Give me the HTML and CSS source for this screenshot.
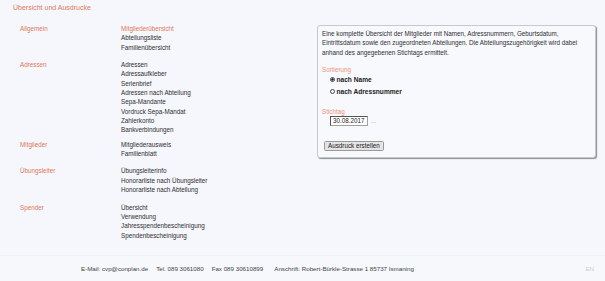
FILE: index.html
```html
<!DOCTYPE html>
<html lang="de">
<head>
    <meta charset="UTF-8">
    <meta name="viewport" content="width=device-width, initial-scale=1.0">
    <title>Übersicht und Ausdrucke</title>
    <link rel="stylesheet" href="styles.css">
</head>
<body>
    <div class="page">
        <h1 class="title">Übersicht und Ausdrucke</h1>

        <div class="main">
            <nav class="menu">
                <div class="group">
                    <div class="group-title">Allgemein</div>
                    <ul class="links">
                        <li class="active">Mitgliederübersicht</li>
                        <li>Abteilungsliste</li>
                        <li>Familienübersicht</li>
                    </ul>
                </div>
                <div class="group compact">
                    <div class="group-title">Adressen</div>
                    <ul class="links">
                        <li>Adressen</li>
                        <li>Adressaufkleber</li>
                        <li>Serienbrief</li>
                        <li>Adressen nach Abteilung</li>
                        <li>Sepa-Mandante</li>
                        <li>Vordruck Sepa-Mandat</li>
                        <li>Zahlerkonto</li>
                        <li>Bankverbindungen</li>
                    </ul>
                </div>
                <div class="group">
                    <div class="group-title">Mitglieder</div>
                    <ul class="links">
                        <li>Mitgliederausweis</li>
                        <li>Familienblatt</li>
                    </ul>
                </div>
                <div class="group">
                    <div class="group-title">Übungsleiter</div>
                    <ul class="links">
                        <li>Übungsleiterinfo</li>
                        <li>Honorarliste nach Übungsleiter</li>
                        <li>Honorarliste nach Abteilung</li>
                    </ul>
                </div>
                <div class="group">
                    <div class="group-title">Spender</div>
                    <ul class="links">
                        <li>Übersicht</li>
                        <li>Verwendung</li>
                        <li>Jahresspendenbescheinigung</li>
                        <li>Spendenbescheinigung</li>
                    </ul>
                </div>
            </nav>

            <div class="panel">
                <p class="desc">Eine komplette Übersicht der Mitglieder mit Namen, Adressnummern, Geburtsdatum, Eintrittsdatum sowie den zugeordneten Abteilungen. Die Abteilungszugehörigkeit wird dabei anhand des angegebenen Stichtags ermittelt.</p>

                <div class="field-label">Sortierung</div>
                <div class="options">
                    <label class="option"><input type="radio" name="sort" checked> nach Name</label>
                    <label class="option"><input type="radio" name="sort"> nach Adressnummer</label>
                </div>

                <div class="field-label stichtag">Stichtag</div>
                <div class="date-row">
                    <input class="date" type="text" value="30.08.2017">
                    <span class="picker">...</span>
                </div>

                <button class="print">Ausdruck erstellen</button>
            </div>
        </div>
    </div>

    <footer class="footer">
        <span>E-Mail: cvp@conplan.de</span>
        <span>Tel. 089 3061080</span>
        <span>Fax 089 30610899</span>
        <span class="address">Anschrift: Robert-Bürkle-Strasse 1 85737 Ismaning</span>
        <span class="lang">EN</span>
    </footer>
</body>
</html>
```

FILE: styles.css
```css
body {
    margin: 0;
    min-height: 100vh;
    display: flex;
    flex-direction: column;
    background-color: #f5f7fc;
    font-family: "Liberation Sans", Arial, sans-serif;
    font-size: 6.3px;
    color: #2e2e2e;
}
.page {
    padding: 3px 9px 0 13px;
}
.title {
    margin: 0;
    font-size: 7px;
    font-weight: normal;
    line-height: 10px;
    color: #e0785a;
}
.main {
    display: flex;
    align-items: flex-start;
    margin-top: 11px;
}
.menu {
    flex: 1;
    padding-left: 7px;
}
.group {
    display: flex;
    margin-bottom: 8px;
}
.group.compact {
    margin-bottom: 5px;
}
.group-title {
    width: 101px;
    line-height: 9.35px;
    color: #e0785a;
}
.links {
    list-style: none;
    margin: 0;
    padding: 0;
    line-height: 9.35px;
}
.links .active {
    color: #e0785a;
}
.panel {
    width: 268px;
    margin-top: 0.5px;
    padding: 3.5px 5px 6px 4px;
    background-color: #f7f9fd;
    border: 1px solid #c6c8ce;
    border-radius: 3px;
    box-shadow: 1px 1px 1px #8c8c8c;
}
.desc {
    margin: 0;
    line-height: 9.35px;
}
.field-label {
    margin-top: 8px;
    line-height: 9.35px;
    color: #ee9377;
}
.field-label.stichtag {
    margin-top: 10.5px;
}
.options {
    display: flex;
    flex-direction: column;
    gap: 3px;
    padding-left: 8px;
}
.option {
    display: flex;
    align-items: center;
    height: 9.35px;
    font-size: 6.6px;
    font-weight: bold;
    color: #222;
}
.option input {
    appearance: none;
    width: 5px;
    height: 5px;
    margin: 0 1.5px 0 0;
    border: 0.6px solid #444;
    border-radius: 50%;
    background-color: #fff;
}
.option input:checked {
    background: radial-gradient(circle, #222 45%, #fff 55%);
}
.date-row {
    display: flex;
    align-items: center;
    padding-left: 8px;
}
.date {
    box-sizing: border-box;
    width: 38px;
    height: 10px;
    padding: 0 0 0 2px;
    border: 1px solid #a0a0a0;
    border-top-color: #555;
    border-left-color: #555;
    background-color: #fff;
    font-family: inherit;
    font-size: 6.3px;
    color: #222;
}
.picker {
    margin-left: 3px;
    color: #aaa;
}
.print {
    display: block;
    margin: 15px 0 0 1.5px;
    height: 10px;
    padding: 0 3.5px;
    border: 1px solid #999;
    border-radius: 1.5px;
    background-color: #e4e4e4;
    font-family: inherit;
    font-size: 6.3px;
    line-height: 8px;
    color: #222;
}
.footer {
    margin-top: auto;
    height: 25px;
    display: flex;
    align-items: center;
    gap: 8px;
    padding: 0 11px 0 81px;
    border-top: 1px solid #eef1f7;
    background-color: #f6f8fc;
    font-size: 6.2px;
    color: #444;
}
.footer .address {
    margin-left: 3px;
}
.footer .lang {
    margin-left: auto;
    color: #c9ccd4;
}
```
